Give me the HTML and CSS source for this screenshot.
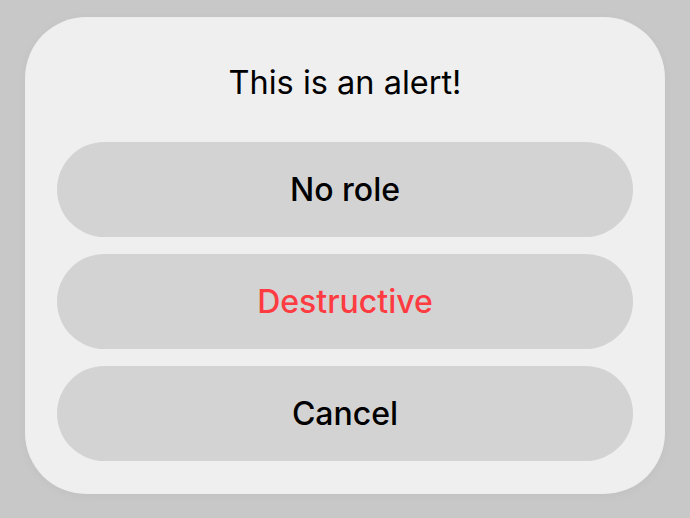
FILE: index.html
```html
<!DOCTYPE html>
<html lang="en">
<head>
  <meta charset="UTF-8" />
  <meta name="viewport" content="width=device-width, initial-scale=1.0" />
  <title>Alert</title>
  <link rel="stylesheet" href="styles.css">
</head>
<body>
  <div class="alert">
    <div class="alert-title">This is an alert!</div>
    <div class="alert-actions">
      <button class="action">No role</button>
      <button class="action destructive">Destructive</button>
      <button class="action">Cancel</button>
    </div>
  </div>
</body>
</html>
```

FILE: styles.css
```css
html, body {
  height: 100%;
}
body {
  margin: 0;
  background-color: #c8c8c8;
  font-family: Inter, "Noto Sans", sans-serif;
  color: #000;
  display: flex;
  justify-content: center;
  padding-top: 18px;
  box-sizing: border-box;
}
.alert {
  width: 638px;
  height: 475px;
  box-sizing: border-box;
  background: #efefef;
  border-radius: 60px;
  box-shadow: 0 0 0 1px rgba(255, 255, 255, 0.7), 0 2px 12px rgba(0, 0, 0, 0.04);
  padding: 0 31px 32px;
  display: flex;
  flex-direction: column;
}
.alert-title {
  height: 124px;
  display: flex;
  align-items: center;
  justify-content: center;
  font-size: 32.5px;
  padding-top: 4px;
  box-sizing: border-box;
}
.alert-actions {
  display: flex;
  flex-direction: column;
  gap: 17px;
}
.action {
  height: 95px;
  border: none;
  border-radius: 48px;
  background: #d3d3d3;
  font-family: inherit;
  font-size: 32px;
  font-weight: 500;
  color: #000;
  cursor: pointer;
}
.action.destructive {
  color: #fe3b41;
}
```
